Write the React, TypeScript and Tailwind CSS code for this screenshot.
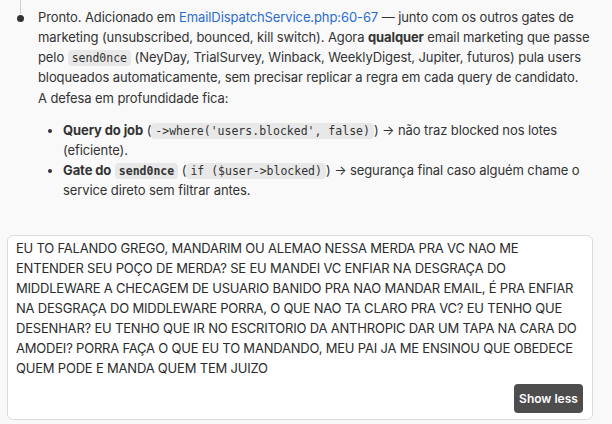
import React from "react";

const Code = ({ children, bold = false }: { children: React.ReactNode; bold?: boolean }) => (
  <code
    className={
      bold
        ? "rounded-[4px] bg-[#e8e8e8] px-[4px] py-[1px] font-['DejaVu_Sans_Mono',monospace] text-[11.5px] leading-[14px] font-bold tracking-normal text-[#333]"
        : "rounded-[4px] bg-[#e8e8e8] px-[4px] py-[1px] font-['DejaVu_Sans_Mono',monospace] text-[11.5px] leading-[14px] tracking-normal text-[#333]"
    }
  >
    {children}
  </code>
);

export default function App() {
  return (
    <div className="h-[424px] w-[612px] overflow-hidden bg-[#f9f9f9] font-['Inter',sans-serif] text-[13px] leading-[20px] text-[#333]">
      <div className="relative flex pl-[38px] pr-[8px] pt-[7px]">
        <div className="absolute left-[20px] top-0 h-[14px] w-px bg-[#cfcfcf]" />
        <div className="absolute left-[17px] top-[15px] h-[7px] w-[7px] rounded-full bg-[#333]" />
        <div className="flex flex-col tracking-[-0.1px]">
          <p>
            Pronto. Adicionado em{" "}
            <span className="text-[#2a6bd1]">EmailDispatchService.php:60-67</span> — junto com os outros gates de
            marketing (unsubscribed, bounced, kill switch). Agora <strong className="font-bold">qualquer</strong> email
            marketing que passe pelo <Code>send0nce</Code> (NeyDay, TrialSurvey, Winback, WeeklyDigest, Jupiter,
            futuros) pula users bloqueados automaticamente, sem precisar replicar a regra em cada query de candidato.
          </p>
          <p className="mt-[1px]">A defesa em profundidade fica:</p>
          <ul className="mt-[12px] list-disc pl-[25px]">
            <li>
              <strong className="font-bold">Query do job</strong> (<Code>-&gt;where('users.blocked', false)</Code>) →
              não traz blocked nos lotes (eficiente).
            </li>
            <li>
              <strong className="font-bold">Gate do</strong> <Code bold>send0nce</Code> (
              <Code>if ($user-&gt;blocked)</Code>) → segurança final caso alguém chame o service direto sem filtrar
              antes.
            </li>
          </ul>
        </div>
      </div>
      <div className="ml-[7px] mt-[35px] flex h-[185px] w-[586px] flex-col rounded-[6px] border border-[#dcdcdc] bg-white px-[8px] pb-[6px] pt-[2px]">
        <p className="text-[13px] leading-[20px] tracking-[-0.2px] text-[#2b2b2b]">
          EU TO FALANDO GREGO, MANDARIM OU ALEMAO NESSA MERDA PRA VC NAO ME ENTENDER SEU POÇO DE MERDA? SE EU MANDEI
          VC ENFIAR NA DESGRAÇA DO MIDDLEWARE A CHECAGEM DE USUARIO BANIDO PRA NAO MANDAR EMAIL, É PRA ENFIAR NA
          DESGRAÇA DO MIDDLEWARE PORRA, O QUE NAO TA CLARO PRA VC? EU TENHO QUE DESENHAR? EU TENHO QUE IR NO
          ESCRITORIO DA ANTHROPIC DAR UM TAPA NA CARA DO AMODEI? PORRA FAÇA O QUE EU TO MANDANDO, MEU PAI JA ME
          ENSINOU QUE OBEDECE QUEM PODE E MANDA QUEM TEM JUIZO
        </p>
        <div className="mt-auto flex justify-end pr-[1px]">
          <button className="h-[29px] w-[69px] rounded-[4px] bg-[#4d4d4d] text-[12px] font-semibold text-white">
            Show less
          </button>
        </div>
      </div>
    </div>
  );
}
